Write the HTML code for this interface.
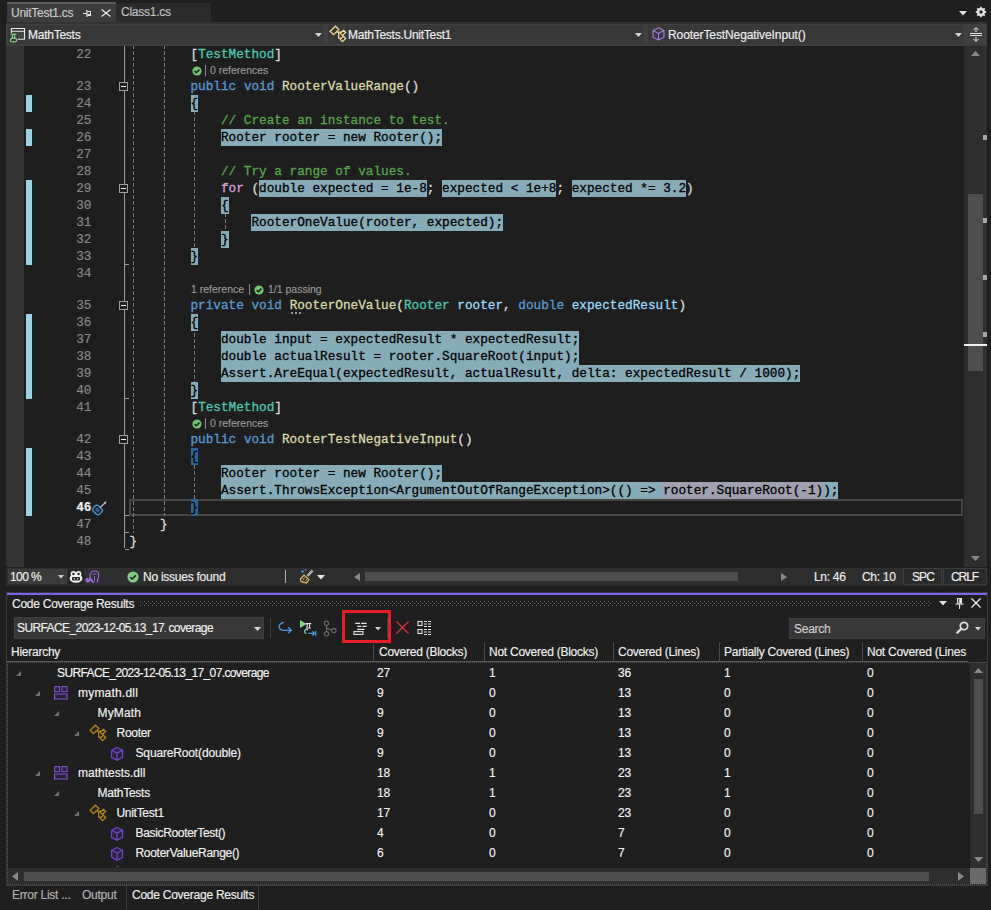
<!DOCTYPE html>
<html><head><meta charset="utf-8">
<style>
*{box-sizing:border-box}
html,body{margin:0;padding:0}
body{width:991px;height:910px;overflow:hidden;background:#1f1f1f;position:relative;font-family:"Liberation Sans",sans-serif;font-size:12px;letter-spacing:-0.25px;color:#dcdcdc;-webkit-text-stroke:0.15px currentColor}
.abs{position:absolute}
svg.abs{overflow:visible}
.cl{position:absolute;left:129.5px;height:17px;line-height:17px;white-space:pre;font-family:"Liberation Mono",monospace;font-size:12.71px;color:#dcdcdc;-webkit-text-stroke:0.3px currentColor;letter-spacing:0}
.hl,.pt,.bm{display:inline-block;height:17px;vertical-align:top}
.hl{background:#86acba;color:#000}
.pt{background:#a0a0b0;color:#000}
.bm{background:#2b659e;color:#000}
.ln{position:absolute;left:40px;width:51.5px;text-align:right;height:17px;line-height:17px;font-family:"Liberation Mono",monospace;font-size:12.71px;color:#8a8a8a;letter-spacing:0}
.ln.cur{color:#f0f0f0;font-weight:bold}
.lens{position:absolute;height:15px;line-height:15px;font-size:10.5px;letter-spacing:0;color:#9a9a9a;white-space:pre}
.sep{display:inline-block;width:1px;height:11px;background:#8a8a8a;vertical-align:middle;margin-right:4px;position:relative;top:-1px}
.covbar{position:absolute;left:26px;width:6px;background:#9cd2e4}
.dash{width:1px;background:linear-gradient(to bottom,#7a7a7a 0,#7a7a7a 4px,transparent 4px,transparent 6px);background-size:1px 6px}
.dots{background-image:radial-gradient(#4a4a4a 0.7px,transparent 0.8px);background-size:4px 3px}
</style></head><body>
<!-- tab bar -->
<div class="abs" style="left:7px;top:2px;width:109px;height:20px;background:#3d3d3d;border-top:2px solid #5a5a5a"></div>
<div class="abs" style="left:11px;top:4px;height:18px;line-height:18px;color:#cccccc">UnitTest1.cs</div>
<div class="abs" style="left:116px;top:3px;width:95px;height:19px;background:#2b2b2b"></div>
<div class="abs" style="left:121px;top:3px;height:19px;line-height:19px;color:#c4c4c4">Class1.cs</div>
<!-- nav bar -->
<div class="abs" style="left:6px;top:22px;width:981px;height:24px;background:#3f3f3f;border-top:2px solid #333"></div>
<div class="abs" style="left:8px;top:25px;width:315px;height:19px;background:#383838"></div>
<div class="abs" style="left:328px;top:25px;width:315px;height:19px;background:#383838"></div>
<div class="abs" style="left:648px;top:25px;width:315px;height:19px;background:#383838"></div>
<div class="abs" style="left:28px;top:26px;height:19px;line-height:19px;color:#f0f0f0">MathTests</div>
<div class="abs" style="left:348px;top:26px;height:19px;line-height:19px;color:#f0f0f0">MathTests.UnitTest1</div>
<div class="abs" style="left:668px;top:26px;height:19px;line-height:19px;color:#f0f0f0;letter-spacing:-0.1px">RooterTestNegativeInput()</div>
<svg class="abs" style="left:83px;top:10px" width="9" height="7" viewBox="0 0 9 7"><g fill="#e8e8e8"><rect x="0" y="3" width="3.5" height="1"/><rect x="3.3" y="0" width="1.2" height="7"/><rect x="4.5" y="1" width="3.5" height="1"/><rect x="7" y="1" width="1" height="5"/><rect x="4.5" y="4" width="3.5" height="2"/></g></svg>
<svg class="abs" style="left:101px;top:9px" width="10" height="8" viewBox="0 0 10 8"><path d="M0.6 0.4 L9.4 7.6 M9.4 0.4 L0.6 7.6" stroke="#e8e8e8" stroke-width="1.3"/></svg>
<svg class="abs" style="left:959.0px;top:11.25px" width="8" height="4.5" viewBox="0 0 8 4.5"><path d="M0 0 L8 0 L4.0 4.5 Z" fill="#e0e0e0"/></svg>
<svg class="abs" style="left:975px;top:6px" width="12" height="12" viewBox="0 0 12 12"><g fill="#e6e6e6"><circle cx="6" cy="6" r="3.9"/><rect x="5.1" y="0.8" width="1.8" height="10.4"/><rect x="0.8" y="5.1" width="10.4" height="1.8"/><rect x="5.1" y="0.8" width="1.8" height="10.4" transform="rotate(45 6 6)"/><rect x="5.1" y="0.8" width="1.8" height="10.4" transform="rotate(-45 6 6)"/></g><circle cx="6" cy="6" r="1.7" fill="#1f1f1f"/></svg>
<svg class="abs" style="left:9px;top:27px" width="17" height="16" viewBox="0 0 17 16"><rect x="8.5" y="4.5" width="7" height="7.5" fill="#454545"/><path d="M2.4 6 V1.5 H15.5 V12.3 H8.8 M2.4 4.3 H15.5" stroke="#e8e8e8" stroke-width="1.1" fill="none"/><rect x="1.6" y="6.6" width="5.8" height="1.2" fill="#86dc8a"/><rect x="2.8" y="7.5" width="1.1" height="3.6" fill="#86dc8a"/><rect x="5.1" y="7.5" width="1.1" height="3.6" fill="#86dc8a"/><path d="M1.4 13.8 Q1.2 11.6 3 11.1 H6.1 Q7.9 11.6 7.7 13.8 Q7.4 14.9 4.55 14.9 Q1.7 14.9 1.4 13.8 Z" stroke="#86dc8a" stroke-width="1.2" fill="none"/></svg>
<svg class="abs" style="left:314.5px;top:33.0px" width="7" height="4" viewBox="0 0 7 4"><path d="M0 0 L7 0 L3.5 4 Z" fill="#d8d8d8"/></svg>
<svg class="abs" style="left:326px;top:24px" width="21" height="20" viewBox="0 0 21 20"><g fill="none" stroke="#f5dc96" stroke-width="1.25" stroke-linejoin="miter"><path d="M9.4 2.2 L12.8 5.6 L7.5 10.7 L4.1 7.3 Z" fill="#3a352a"/><path d="M17.4 6.3 L19.7 8.5 L16.5 11.4 L14.3 9.2 Z" fill="#3a352a"/><path d="M17.4 12.1 L19.7 14.5 L16.5 17.7 L14.3 15.3 Z" fill="#3a352a"/><path d="M10.3 8 H15 M12.7 8 V14 H14.8"/></g></svg>
<svg class="abs" style="left:634.5px;top:33.0px" width="7" height="4" viewBox="0 0 7 4"><path d="M0 0 L7 0 L3.5 4 Z" fill="#d8d8d8"/></svg>
<svg class="abs" style="left:652px;top:27px" width="13" height="14" viewBox="0 0 13 14"><path d="M6.5 0.8 L12 3.6 V10.2 L6.5 13 L1 10.2 V3.6 Z M1 3.6 L6.5 6.4 L12 3.6 M6.5 6.4 V13" stroke="#a77fd6" stroke-width="1.1" fill="#3a3446"/></svg>
<svg class="abs" style="left:954.5px;top:33.0px" width="7" height="4" viewBox="0 0 7 4"><path d="M0 0 L7 0 L3.5 4 Z" fill="#d8d8d8"/></svg>
<svg class="abs" style="left:970px;top:27px" width="12" height="15" viewBox="0 0 12 15"><rect x="0" y="6" width="12" height="1" fill="#e6e6e6"/><rect x="0" y="8" width="12" height="1" fill="#e6e6e6"/><rect x="5.5" y="1" width="1" height="4" fill="#e6e6e6"/><rect x="5.5" y="10" width="1" height="4" fill="#e6e6e6"/><path d="M3.5 3 L6 0.5 L8.5 3 M3.5 12 L6 14.5 L8.5 12" stroke="#e6e6e6" stroke-width="1" fill="none"/></svg>
<!-- editor -->
<div class="abs" style="left:6px;top:46px;width:18px;height:521px;background:#333"></div>
<div class="abs" style="left:24px;top:46px;width:940px;height:521px;background:#1e1e1e"></div>
<div class="abs" style="left:964px;top:46px;width:23px;height:521px;background:#2e2e2e"></div>
<svg class="abs" style="left:971px;top:51px" width="9" height="5" viewBox="0 0 9 5"><path d="M0 5 L4.5 0 L9 5 Z" fill="#8a8a8a"/></svg>
<svg class="abs" style="left:971px;top:556px" width="9" height="5" viewBox="0 0 9 5"><path d="M0 0 L4.5 5 L9 0 Z" fill="#8a8a8a"/></svg>
<div class="abs" style="left:968px;top:194px;width:15px;height:177px;background:#4d4d4d"></div>
<div class="abs" style="left:983px;top:135px;width:4px;height:5px;background:#a8a8a8"></div>
<div class="abs" style="left:983px;top:218px;width:4px;height:5px;background:#a8a8a8"></div>
<div class="abs" style="left:983px;top:275px;width:4px;height:5px;background:#a8a8a8"></div>
<div class="abs" style="left:983px;top:332px;width:4px;height:5px;background:#a8a8a8"></div>
<div class="abs" style="left:964px;top:344px;width:23px;height:2px;background:#f0f0f0"></div>
<div class="abs" style="left:129px;top:499px;width:834px;height:17px;border:2px solid #464646"></div>
<div class="abs" style="left:124px;top:46px;width:1px;height:502px;background:#9a9a9a"></div>
<svg class="abs" style="left:119px;top:82px" width="9" height="9" viewBox="0 0 9 9"><rect x="0.5" y="0.5" width="8" height="8" fill="#1e1e1e" stroke="#a0a0a0"/><rect x="2" y="4" width="5" height="1" fill="#f0f0f0"/></svg>
<svg class="abs" style="left:119px;top:184px" width="9" height="9" viewBox="0 0 9 9"><rect x="0.5" y="0.5" width="8" height="8" fill="#1e1e1e" stroke="#a0a0a0"/><rect x="2" y="4" width="5" height="1" fill="#f0f0f0"/></svg>
<svg class="abs" style="left:119px;top:301px" width="9" height="9" viewBox="0 0 9 9"><rect x="0.5" y="0.5" width="8" height="8" fill="#1e1e1e" stroke="#a0a0a0"/><rect x="2" y="4" width="5" height="1" fill="#f0f0f0"/></svg>
<svg class="abs" style="left:119px;top:435px" width="9" height="9" viewBox="0 0 9 9"><rect x="0.5" y="0.5" width="8" height="8" fill="#1e1e1e" stroke="#a0a0a0"/><rect x="2" y="4" width="5" height="1" fill="#f0f0f0"/></svg>
<div class="abs" style="left:125px;top:264px;width:4px;height:1px;background:#9a9a9a"></div>
<div class="abs" style="left:125px;top:398px;width:4px;height:1px;background:#9a9a9a"></div>
<div class="abs" style="left:125px;top:515px;width:4px;height:1px;background:#9a9a9a"></div>
<div class="abs" style="left:125px;top:532px;width:4px;height:1px;background:#9a9a9a"></div>
<div class="abs" style="left:125px;top:549px;width:4px;height:1px;background:#9a9a9a"></div>
<div class="abs dash" style="left:133px;top:46px;height:487px;background-position:0 5px"></div>
<div class="abs dash" style="left:164px;top:46px;height:470px;background-position:0 5px"></div>
<div class="abs dash" style="left:194px;top:112px;height:136px;background-position:0 5px"></div>
<div class="abs dash" style="left:225px;top:214px;height:17px;background-position:0 5px"></div>
<div class="abs dash" style="left:194px;top:331px;height:51px;background-position:0 2px"></div>
<div class="abs dash" style="left:194px;top:465px;height:34px;background-position:0 0px"></div>
<svg class="abs" style="left:91px;top:498px" width="19" height="18" viewBox="0 0 19 18"><g transform="rotate(45 9.5 9)"><rect x="5" y="9.5" width="9" height="7.5" rx="2.6" fill="none" stroke="#4a9de0" stroke-width="1.3"/><rect x="7.2" y="11.6" width="4.6" height="3.3" fill="#2f5f8f"/><rect x="9" y="3" width="1.4" height="7" fill="#b8b8b8"/><path d="M8.3 3.5 L9.7 0.5 L11.1 3.5 Z" fill="#b8b8b8"/></g></svg>
<div class="abs" style="left:291px;top:312px;width:2px;height:2px;background:#9a9a9a"></div>
<div class="abs" style="left:295px;top:312px;width:2px;height:2px;background:#9a9a9a"></div>
<div class="abs" style="left:299px;top:312px;width:2px;height:2px;background:#9a9a9a"></div>
<div class="abs" style="left:375px;top:143px;width:2px;height:2px;background:#b0a4a8"></div>
<div class="abs" style="left:379px;top:143px;width:2px;height:2px;background:#b0a4a8"></div>
<div class="abs" style="left:383px;top:143px;width:2px;height:2px;background:#b0a4a8"></div>
<div class="cl" style="top:46px">        <span style="color:#dcdcdc">[</span><span style="color:#4ec9b0">TestMethod</span><span style="color:#dcdcdc">]</span></div>
<div class="ln" style="top:46px">22</div>
<div class="cl" style="top:78px">        <span style="color:#569cd6">public</span> <span style="color:#569cd6">void</span> <span style="color:#dcdcaa">RooterValueRange</span><span style="color:#dcdcdc">()</span></div>
<div class="ln" style="top:78px">23</div>
<div class="cl" style="top:95px">        <span class="hl">{</span></div>
<div class="ln" style="top:95px">24</div>
<div class="cl" style="top:112px">            <span style="color:#57a64a">// Create an instance to test.</span></div>
<div class="ln" style="top:112px">25</div>
<div class="cl" style="top:129px">            <span class="hl">Rooter rooter = new Rooter();</span></div>
<div class="ln" style="top:129px">26</div>
<div class="cl" style="top:146px"></div>
<div class="ln" style="top:146px">27</div>
<div class="cl" style="top:163px">            <span style="color:#57a64a">// Try a range of values.</span></div>
<div class="ln" style="top:163px">28</div>
<div class="cl" style="top:180px">            <span style="color:#d8a0df">for</span><span style="color:#dcdcdc"> (</span><span class="hl">double expected = 1e-8</span><span style="color:#dcdcdc">; </span><span class="hl">expected &lt; 1e+8</span><span style="color:#dcdcdc">; </span><span class="hl">expected *= 3.2</span><span style="color:#dcdcdc">)</span></div>
<div class="ln" style="top:180px">29</div>
<div class="cl" style="top:197px">            <span class="hl">{</span></div>
<div class="ln" style="top:197px">30</div>
<div class="cl" style="top:214px">                <span class="hl">RooterOneValue(rooter, expected);</span></div>
<div class="ln" style="top:214px">31</div>
<div class="cl" style="top:231px">            <span class="hl">}</span></div>
<div class="ln" style="top:231px">32</div>
<div class="cl" style="top:248px">        <span class="hl">}</span></div>
<div class="ln" style="top:248px">33</div>
<div class="cl" style="top:265px"></div>
<div class="ln" style="top:265px">34</div>
<div class="cl" style="top:297px">        <span style="color:#569cd6">private</span> <span style="color:#569cd6">void</span> <span style="color:#dcdcaa">RooterOneValue</span><span style="color:#dcdcdc">(</span><span style="color:#4ec9b0">Rooter</span> <span style="color:#9cdcfe">rooter</span><span style="color:#dcdcdc">, </span><span style="color:#569cd6">double</span> <span style="color:#9cdcfe">expectedResult</span><span style="color:#dcdcdc">)</span></div>
<div class="ln" style="top:297px">35</div>
<div class="cl" style="top:314px">        <span class="hl">{</span></div>
<div class="ln" style="top:314px">36</div>
<div class="cl" style="top:331px">            <span class="hl">double input = expectedResult * expectedResult;</span></div>
<div class="ln" style="top:331px">37</div>
<div class="cl" style="top:348px">            <span class="hl">double actualResult = rooter.SquareRoot(input);</span></div>
<div class="ln" style="top:348px">38</div>
<div class="cl" style="top:365px">            <span class="hl">Assert.AreEqual(expectedResult, actualResult, delta: expectedResult / 1000);</span></div>
<div class="ln" style="top:365px">39</div>
<div class="cl" style="top:382px">        <span class="hl">}</span></div>
<div class="ln" style="top:382px">40</div>
<div class="cl" style="top:399px">        <span style="color:#dcdcdc">[</span><span style="color:#4ec9b0">TestMethod</span><span style="color:#dcdcdc">]</span></div>
<div class="ln" style="top:399px">41</div>
<div class="cl" style="top:431px">        <span style="color:#569cd6">public</span> <span style="color:#569cd6">void</span> <span style="color:#dcdcaa">RooterTestNegativeInput</span><span style="color:#dcdcdc">()</span></div>
<div class="ln" style="top:431px">42</div>
<div class="cl" style="top:448px">        <span class="bm">{</span></div>
<div class="ln" style="top:448px">43</div>
<div class="cl" style="top:465px">            <span class="hl">Rooter rooter = new Rooter();</span></div>
<div class="ln" style="top:465px">44</div>
<div class="cl" style="top:482px">            <span class="hl">Assert.ThrowsException&lt;ArgumentOutOfRangeException&gt;(() =&gt; </span><span class="pt">rooter.SquareRoot(-1)</span><span class="hl">);</span></div>
<div class="ln" style="top:482px">45</div>
<div class="cl" style="top:499px">        <span class="bm">}</span></div>
<div class="ln cur" style="top:499px">46</div>
<div class="cl" style="top:516px">    <span style="color:#dcdcdc">}</span></div>
<div class="ln" style="top:516px">47</div>
<div class="cl" style="top:533px"><span style="color:#dcdcdc">}</span></div>
<div class="ln" style="top:533px">48</div>
<svg style="position:absolute;left:192px;top:65.5px" width="10" height="10" viewBox="0 0 10 10"><circle cx="5" cy="5" r="4.6" fill="#6cc66c"/><path d="M2.6 5.1 L4.3 6.7 L7.4 3.6" stroke="#1e1e1e" stroke-width="1.5" fill="none"/></svg>
<div class="lens" style="left:205px;top:63px"><span class="sep"></span>0 references</div>
<div class="lens" style="left:191px;top:282px">1 reference</div>
<div class="lens" style="left:249px;top:282px"><span class="sep"></span></div>
<svg style="position:absolute;left:254px;top:284.5px" width="10" height="10" viewBox="0 0 10 10"><circle cx="5" cy="5" r="4.6" fill="#6cc66c"/><path d="M2.6 5.1 L4.3 6.7 L7.4 3.6" stroke="#1e1e1e" stroke-width="1.5" fill="none"/></svg>
<div class="lens" style="left:268px;top:282px">1/1 passing</div>
<svg style="position:absolute;left:192px;top:418.5px" width="10" height="10" viewBox="0 0 10 10"><circle cx="5" cy="5" r="4.6" fill="#6cc66c"/><path d="M2.6 5.1 L4.3 6.7 L7.4 3.6" stroke="#1e1e1e" stroke-width="1.5" fill="none"/></svg>
<div class="lens" style="left:205px;top:416px"><span class="sep"></span>0 references</div>
<div class="covbar" style="top:95px;height:17px"></div>
<div class="covbar" style="top:129px;height:17px"></div>
<div class="covbar" style="top:180px;height:85px"></div>
<div class="covbar" style="top:314px;height:85px"></div>
<div class="covbar" style="top:448px;height:68px"></div>
<div class="abs" style="left:6px;top:568px;width:981px;height:18px;background:#2e2e2e"></div>
<div class="abs" style="left:8px;top:569px;width:59px;height:15px;background:#3b3b3b"></div>
<div class="abs" style="left:10px;top:570px;height:15px;line-height:15px;color:#f0f0f0;letter-spacing:-0.6px">100 %</div>
<svg class="abs" style="left:58.0px;top:575.25px" width="6" height="3.5" viewBox="0 0 6 3.5"><path d="M0 0 L6 0 L3.0 3.5 Z" fill="#cfcfcf"/></svg>
<div class="abs" style="left:68px;top:569px;width:16px;height:15px;background:#262626"></div>
<svg class="abs" style="left:69px;top:570px" width="14" height="13" viewBox="0 0 14 13"><ellipse cx="7" cy="8.4" rx="6.4" ry="4.3" fill="#f0f0f0"/><circle cx="4.4" cy="3.9" r="2.8" fill="#f0f0f0"/><circle cx="9.6" cy="3.9" r="2.8" fill="#f0f0f0"/><circle cx="4.4" cy="3.9" r="1.2" fill="#262626"/><circle cx="9.6" cy="3.9" r="1.2" fill="#262626"/><rect x="3" y="6.9" width="8" height="3.7" rx="1" fill="#262626"/><rect x="4.7" y="8" width="1.2" height="1.6" fill="#d0d0d0"/><rect x="8.1" y="8" width="1.2" height="1.6" fill="#d0d0d0"/></svg>
<svg class="abs" style="left:86px;top:570px" width="14" height="14" viewBox="0 0 14 14"><path d="M6.5 12.5 V10.5 Q3.8 9 4 5.5 Q4.5 1 8.5 1 Q12.8 1 12.8 5.5 Q12.8 8 11.5 9.5 V12.5" stroke="#9a68dc" stroke-width="1.2" fill="none"/><path d="M6.5 4.5 Q8.5 3 10.5 4.5 M8.5 6 V11.5" stroke="#9a68dc" stroke-width="1" fill="none"/><path d="M1.8 7.8 A2.4 2.4 0 1 0 4.2 10.6 L7 13.5 L8.2 12.3 L5.4 9.4 A2.4 2.4 0 0 0 2.6 7 L3.6 8.6 L2.6 9.6 Z" fill="#9a68dc"/></svg>
<svg class="abs" style="left:127px;top:571px" width="12" height="12" viewBox="0 0 12 12"><circle cx="6" cy="6" r="5.6" fill="#7ccc7c"/><path d="M3.2 6.2 L5.2 8 L8.8 4.4" stroke="#1e1e1e" stroke-width="1.5" fill="none"/></svg>
<div class="abs" style="left:143px;top:570px;height:15px;line-height:15px;color:#f0f0f0">No issues found</div>
<div class="abs" style="left:285px;top:570px;width:1px;height:13px;background:#b0b0b8"></div>
<svg class="abs" style="left:299px;top:569px" width="15" height="15" viewBox="0 0 15 15"><path d="M8.5 7 L13.5 1.5" stroke="#cfcfcf" stroke-width="2.2"/><path d="M8.5 7 L13.5 1.5" stroke="#555" stroke-width="0.8" stroke-dasharray="1 1"/><path d="M5 6 L10 10.5 L7.5 14 L2 12.5 L1.5 10 Z" fill="none" stroke="#d8b46a" stroke-width="1.3"/><path d="M4 11 L5.5 8.5 M6.5 12 L8 9.5" stroke="#d8b46a" stroke-width="0.9"/><path d="M2 2.5 L3.5 1 L5 2.5 L3.5 4 Z" fill="#4aa0e8"/><path d="M5.5 0.8 L6.5 0 L7.5 0.8 L6.5 1.8 Z" fill="#9a7ad8"/></svg>
<svg class="abs" style="left:316.5px;top:574.75px" width="8" height="4.5" viewBox="0 0 8 4.5"><path d="M0 0 L8 0 L4.0 4.5 Z" fill="#e8e8e8"/></svg>
<svg class="abs" style="left:354px;top:573px" width="6" height="8" viewBox="0 0 6 8"><path d="M6 0 L0 4 L6 8 Z" fill="#8a8a8a"/></svg>
<div class="abs" style="left:365px;top:572px;width:373px;height:9px;background:#4d4d4d"></div>
<svg class="abs" style="left:781px;top:573px" width="6" height="8" viewBox="0 0 6 8"><path d="M0 0 L6 4 L0 8 Z" fill="#8a8a8a"/></svg>
<div class="abs" style="left:814px;top:570px;height:15px;line-height:15px;color:#f0f0f0;letter-spacing:-0.3px">Ln: 46</div>
<div class="abs" style="left:862px;top:570px;height:15px;line-height:15px;color:#f0f0f0;letter-spacing:-0.3px">Ch: 10</div>
<div class="abs" style="left:903px;top:568px;width:39px;height:17px;border:1px solid #3c3c3c;background:#2a2a2a"></div>
<div class="abs" style="left:943px;top:568px;width:44px;height:17px;border:1px solid #3c3c3c;background:#2a2a2a"></div>
<div class="abs" style="left:912px;top:570px;height:15px;line-height:15px;color:#f0f0f0;letter-spacing:-0.9px">SPC</div>
<div class="abs" style="left:951px;top:570px;height:15px;line-height:15px;color:#f0f0f0;letter-spacing:-1.1px">CRLF</div>
<div class="abs" style="left:6px;top:592px;width:982px;height:294px;border:1px solid #3a3a3a"></div>
<div class="abs" style="left:7px;top:593px;width:980px;height:2px;background:#7a66ee"></div>
<div class="abs" style="left:12px;top:596px;height:16px;line-height:16px;color:#f0f0f0">Code Coverage Results</div>
<svg class="abs" style="left:140px;top:601px" width="792" height="5"><defs><pattern id="dp" width="4" height="4" patternUnits="userSpaceOnUse"><rect x="0" y="0" width="1" height="1" fill="#6a6a6a"/><rect x="2" y="2" width="1" height="1" fill="#6a6a6a"/></pattern></defs><rect width="792" height="5" fill="url(#dp)"/></svg>
<svg class="abs" style="left:939.0px;top:601.25px" width="8" height="4.5" viewBox="0 0 8 4.5"><path d="M0 0 L8 0 L4.0 4.5 Z" fill="#e0e0e0"/></svg>
<svg class="abs" style="left:955px;top:597px" width="9" height="13" viewBox="0 0 9 13"><rect x="2" y="1" width="5" height="5.5" fill="#e6e6e6"/><rect x="3.2" y="1.8" width="1" height="4" fill="#1f1f1f"/><rect x="0.5" y="6.5" width="8" height="1.1" fill="#e6e6e6"/><rect x="4" y="7" width="1.1" height="5" fill="#e6e6e6"/></svg>
<svg class="abs" style="left:971px;top:598px" width="10" height="10" viewBox="0 0 10 10"><path d="M0.5 0.5 L9.5 9.5 M9.5 0.5 L0.5 9.5" stroke="#e6e6e6" stroke-width="1.4"/></svg>
<div class="abs" style="left:14px;top:617px;width:250px;height:22px;background:#383838;border:1px solid #3f3f3f"></div>
<div class="abs" style="left:17px;top:618px;height:20px;line-height:20px;color:#f0f0f0;letter-spacing:-0.6px">SURFACE_2023-12-05.13_17<span style="font-size:8px">.</span> coverage</div>
<svg class="abs" style="left:253.5px;top:626.5px" width="7" height="4" viewBox="0 0 7 4"><path d="M0 0 L7 0 L3.5 4 Z" fill="#d8d8d8"/></svg>
<div class="abs" style="left:270px;top:618px;width:1px;height:20px;background:#3f3f3f"></div>
<svg class="abs" style="left:278px;top:621px" width="15" height="15" viewBox="0 0 15 15"><path d="M5.8 1.3 Q1.2 2.6 1.2 5.6 Q1.2 9.3 5.5 9.3 H13.3 M10.2 6.2 L13.3 9.3 L10.2 12.4" stroke="#4a9de8" stroke-width="1.3" fill="none"/></svg>
<svg class="abs" style="left:298px;top:619px" width="19" height="17" viewBox="0 0 19 17"><path d="M2 1 L8.6 5 L2 9 Z" fill="#7fd77a"/><g fill="#e8e8e8"><rect x="7.6" y="4" width="5.6" height="1.1"/><rect x="8.6" y="5" width="1.1" height="4"/><rect x="11" y="5" width="1.1" height="4"/><rect x="7.8" y="8.6" width="5.2" height="0.9"/></g><path d="M10 10.6 H8.3 Q6.6 10.6 6.6 12.4 Q6.6 14.4 8.3 14.4" stroke="#80e0dc" stroke-width="1.1" fill="none"/><path d="M10.5 14.4 H16.6 M14.4 12.2 L16.6 14.4 L14.4 16.6 M17.8 11.8 V17" stroke="#4aa8e8" stroke-width="1.1" fill="none"/></svg>
<svg class="abs" style="left:323px;top:620px" width="14" height="17" viewBox="0 0 14 17"><g fill="none" stroke="#6a6a6a" stroke-width="1.1"><circle cx="3.5" cy="3.3" r="2.2"/><circle cx="3.5" cy="13.8" r="2.2"/><circle cx="10.8" cy="10.6" r="2.2"/><path d="M3.5 5.5 V11.6 M3.9 8.3 L8.7 9.9"/></g></svg>
<div class="abs" style="left:342px;top:610px;width:49px;height:33px;border:3px solid #ec1c24"></div>
<svg class="abs" style="left:353px;top:622px" width="15" height="13" viewBox="0 0 15 13"><path d="M2.2 1.4 H7 M8 1.4 H13.6 M4.2 4.4 H8.2 M9.4 4.4 H13.6 M4.2 7.4 H11.4" stroke="#e6e6e6" stroke-width="1.2"/><rect x="1" y="9.6" width="9" height="2.8" fill="none" stroke="#e6e6e6" stroke-width="1.1"/></svg>
<svg class="abs" style="left:375.0px;top:626.75px" width="6" height="3.5" viewBox="0 0 6 3.5"><path d="M0 0 L6 0 L3.0 3.5 Z" fill="#d0d0d0"/></svg>
<div class="abs" style="left:387px;top:618px;width:1px;height:20px;background:#3f3f3f"></div>
<svg class="abs" style="left:396px;top:621px" width="13" height="13" viewBox="0 0 13 13"><path d="M0.5 0.5 L12.5 12.5 M12.5 0.5 L0.5 12.5" stroke="#e0303a" stroke-width="1.3"/></svg>
<svg class="abs" style="left:417px;top:620px" width="16" height="16" viewBox="0 0 16 16"><g fill="none" stroke="#e6e6e6" stroke-width="1.1"><rect x="1" y="1.5" width="4" height="4"/><rect x="1" y="9.5" width="4" height="4"/></g><path d="M7 1.5 H14 M7 4 H14 M7 6.5 H14 M7 9.5 H14 M7 12 H14 M7 14.5 H14" stroke="#e6e6e6" stroke-width="1" stroke-dasharray="3 1"/></svg>
<div class="abs" style="left:789px;top:618px;width:196px;height:21px;background:#383838;border:1px solid #3f3f3f"></div>
<div class="abs" style="left:794px;top:619px;height:21px;line-height:21px;color:#d0d0d0">Search</div>
<svg class="abs" style="left:956px;top:621px" width="13" height="13" viewBox="0 0 13 13"><circle cx="8" cy="5" r="3.7" fill="none" stroke="#e0e0e0" stroke-width="1.7"/><path d="M5.3 7.7 L1.2 11.8" stroke="#e0e0e0" stroke-width="2.2" stroke-linecap="round"/></svg>
<svg class="abs" style="left:975.0px;top:626.75px" width="6" height="3.5" viewBox="0 0 6 3.5"><path d="M0 0 L6 0 L3.0 3.5 Z" fill="#d8d8d8"/></svg>
<div class="abs" style="left:11px;top:643px;height:18px;line-height:18px;color:#f0f0f0;white-space:nowrap">Hierarchy</div>
<div class="abs" style="left:379px;top:643px;height:18px;line-height:18px;color:#f0f0f0;white-space:nowrap">Covered (Blocks)</div>
<div class="abs" style="left:489px;top:643px;height:18px;line-height:18px;color:#f0f0f0;white-space:nowrap">Not Covered (Blocks)</div>
<div class="abs" style="left:618px;top:643px;height:18px;line-height:18px;color:#f0f0f0;white-space:nowrap">Covered (Lines)</div>
<div class="abs" style="left:724px;top:643px;height:18px;line-height:18px;color:#f0f0f0;white-space:nowrap">Partially Covered (Lines)</div>
<div class="abs" style="left:867px;top:643px;height:18px;line-height:18px;color:#f0f0f0;white-space:nowrap">Not Covered (Lines</div>
<div class="abs" style="left:373px;top:642px;width:1px;height:19px;background:#4a4a4a"></div>
<div class="abs" style="left:484px;top:642px;width:1px;height:19px;background:#4a4a4a"></div>
<div class="abs" style="left:613px;top:642px;width:1px;height:19px;background:#4a4a4a"></div>
<div class="abs" style="left:719px;top:642px;width:1px;height:19px;background:#4a4a4a"></div>
<div class="abs" style="left:862px;top:642px;width:1px;height:19px;background:#4a4a4a"></div>
<div class="abs" style="left:968px;top:643px;width:19px;height:19px;background:#1f1f1f"></div>
<svg class="abs" style="left:16px;top:671px" width="5" height="5" viewBox="0 0 5 5"><path d="M5 0 L5 5 L0 5 Z" fill="#707070"/></svg>
<div class="abs" style="left:57px;top:663px;height:20px;line-height:20px;color:#f4f4f4;white-space:nowrap;letter-spacing:-0.62px">SURFACE_2023-12-05.13_17_07.coverage</div>
<div class="abs" style="left:377px;top:663px;height:20px;line-height:20px;color:#f4f4f4">27</div>
<div class="abs" style="left:489px;top:663px;height:20px;line-height:20px;color:#f4f4f4">1</div>
<div class="abs" style="left:618px;top:663px;height:20px;line-height:20px;color:#f4f4f4">36</div>
<div class="abs" style="left:724px;top:663px;height:20px;line-height:20px;color:#f4f4f4">1</div>
<div class="abs" style="left:867px;top:663px;height:20px;line-height:20px;color:#f4f4f4">0</div>
<svg class="abs" style="left:35px;top:691px" width="5" height="5" viewBox="0 0 5 5"><path d="M5 0 L5 5 L0 5 Z" fill="#707070"/></svg>
<svg class="abs" style="left:54px;top:686px" width="14" height="14" viewBox="0 0 14 14"><g fill="#272233" stroke="#7a4fc6" stroke-width="1.2"><rect x="0.6" y="0.6" width="5" height="5"/><rect x="8" y="0.6" width="5" height="5"/><rect x="0.6" y="8" width="12.4" height="5"/></g></svg>
<div class="abs" style="left:78px;top:683px;height:20px;line-height:20px;color:#f4f4f4;white-space:nowrap;letter-spacing:0.2px">mymath.dll</div>
<div class="abs" style="left:377px;top:683px;height:20px;line-height:20px;color:#f4f4f4">9</div>
<div class="abs" style="left:489px;top:683px;height:20px;line-height:20px;color:#f4f4f4">0</div>
<div class="abs" style="left:618px;top:683px;height:20px;line-height:20px;color:#f4f4f4">13</div>
<div class="abs" style="left:724px;top:683px;height:20px;line-height:20px;color:#f4f4f4">0</div>
<div class="abs" style="left:867px;top:683px;height:20px;line-height:20px;color:#f4f4f4">0</div>
<svg class="abs" style="left:54px;top:711px" width="5" height="5" viewBox="0 0 5 5"><path d="M5 0 L5 5 L0 5 Z" fill="#707070"/></svg>
<div class="abs" style="left:97.5px;top:703px;height:20px;line-height:20px;color:#f4f4f4;white-space:nowrap;letter-spacing:0.15px">MyMath</div>
<div class="abs" style="left:377px;top:703px;height:20px;line-height:20px;color:#f4f4f4">9</div>
<div class="abs" style="left:489px;top:703px;height:20px;line-height:20px;color:#f4f4f4">0</div>
<div class="abs" style="left:618px;top:703px;height:20px;line-height:20px;color:#f4f4f4">13</div>
<div class="abs" style="left:724px;top:703px;height:20px;line-height:20px;color:#f4f4f4">0</div>
<div class="abs" style="left:867px;top:703px;height:20px;line-height:20px;color:#f4f4f4">0</div>
<svg class="abs" style="left:74px;top:731px" width="5" height="5" viewBox="0 0 5 5"><path d="M5 0 L5 5 L0 5 Z" fill="#707070"/></svg>
<svg class="abs" style="left:86.0px;top:723px" width="21" height="20" viewBox="0 0 21 20"><g fill="none" stroke="#b88812" stroke-width="1.25" stroke-linejoin="miter"><path d="M9.4 2.2 L12.8 5.6 L7.5 10.7 L4.1 7.3 Z" fill="#262218"/><path d="M17.4 6.3 L19.7 8.5 L16.5 11.4 L14.3 9.2 Z" fill="#262218"/><path d="M17.4 12.1 L19.7 14.5 L16.5 17.7 L14.3 15.3 Z" fill="#262218"/><path d="M10.3 8 H15 M12.7 8 V14 H14.8"/></g></svg>
<div class="abs" style="left:116.5px;top:723px;height:20px;line-height:20px;color:#f4f4f4;white-space:nowrap;letter-spacing:-0.28px">Rooter</div>
<div class="abs" style="left:377px;top:723px;height:20px;line-height:20px;color:#f4f4f4">9</div>
<div class="abs" style="left:489px;top:723px;height:20px;line-height:20px;color:#f4f4f4">0</div>
<div class="abs" style="left:618px;top:723px;height:20px;line-height:20px;color:#f4f4f4">13</div>
<div class="abs" style="left:724px;top:723px;height:20px;line-height:20px;color:#f4f4f4">0</div>
<div class="abs" style="left:867px;top:723px;height:20px;line-height:20px;color:#f4f4f4">0</div>
<svg class="abs" style="left:111.0px;top:746.5px" width="13" height="14" viewBox="0 0 13 14"><path d="M6 0.5 L11.6 3.4 V10.4 L6 13.2 L0.6 10.4 V3.4 Z" fill="#29223a" stroke="#7046c0" stroke-width="1.3"/><path d="M0.6 3.4 L6 6.1 L11.6 3.4 M6 6.1 V13.2" fill="none" stroke="#7046c0" stroke-width="1.3"/></svg>
<div class="abs" style="left:135.5px;top:743px;height:20px;line-height:20px;color:#f4f4f4;white-space:nowrap;letter-spacing:-0.15px">SquareRoot(double)</div>
<div class="abs" style="left:377px;top:743px;height:20px;line-height:20px;color:#f4f4f4">9</div>
<div class="abs" style="left:489px;top:743px;height:20px;line-height:20px;color:#f4f4f4">0</div>
<div class="abs" style="left:618px;top:743px;height:20px;line-height:20px;color:#f4f4f4">13</div>
<div class="abs" style="left:724px;top:743px;height:20px;line-height:20px;color:#f4f4f4">0</div>
<div class="abs" style="left:867px;top:743px;height:20px;line-height:20px;color:#f4f4f4">0</div>
<svg class="abs" style="left:35px;top:771px" width="5" height="5" viewBox="0 0 5 5"><path d="M5 0 L5 5 L0 5 Z" fill="#707070"/></svg>
<svg class="abs" style="left:54px;top:766px" width="14" height="14" viewBox="0 0 14 14"><g fill="#272233" stroke="#7a4fc6" stroke-width="1.2"><rect x="0.6" y="0.6" width="5" height="5"/><rect x="8" y="0.6" width="5" height="5"/><rect x="0.6" y="8" width="12.4" height="5"/></g></svg>
<div class="abs" style="left:78px;top:763px;height:20px;line-height:20px;color:#f4f4f4;white-space:nowrap;letter-spacing:0px">mathtests.dll</div>
<div class="abs" style="left:377px;top:763px;height:20px;line-height:20px;color:#f4f4f4">18</div>
<div class="abs" style="left:489px;top:763px;height:20px;line-height:20px;color:#f4f4f4">1</div>
<div class="abs" style="left:618px;top:763px;height:20px;line-height:20px;color:#f4f4f4">23</div>
<div class="abs" style="left:724px;top:763px;height:20px;line-height:20px;color:#f4f4f4">1</div>
<div class="abs" style="left:867px;top:763px;height:20px;line-height:20px;color:#f4f4f4">0</div>
<svg class="abs" style="left:54px;top:791px" width="5" height="5" viewBox="0 0 5 5"><path d="M5 0 L5 5 L0 5 Z" fill="#707070"/></svg>
<div class="abs" style="left:97.5px;top:783px;height:20px;line-height:20px;color:#f4f4f4;white-space:nowrap;letter-spacing:-0.25px">MathTests</div>
<div class="abs" style="left:377px;top:783px;height:20px;line-height:20px;color:#f4f4f4">18</div>
<div class="abs" style="left:489px;top:783px;height:20px;line-height:20px;color:#f4f4f4">1</div>
<div class="abs" style="left:618px;top:783px;height:20px;line-height:20px;color:#f4f4f4">23</div>
<div class="abs" style="left:724px;top:783px;height:20px;line-height:20px;color:#f4f4f4">1</div>
<div class="abs" style="left:867px;top:783px;height:20px;line-height:20px;color:#f4f4f4">0</div>
<svg class="abs" style="left:74px;top:811px" width="5" height="5" viewBox="0 0 5 5"><path d="M5 0 L5 5 L0 5 Z" fill="#707070"/></svg>
<svg class="abs" style="left:86.0px;top:803px" width="21" height="20" viewBox="0 0 21 20"><g fill="none" stroke="#b88812" stroke-width="1.25" stroke-linejoin="miter"><path d="M9.4 2.2 L12.8 5.6 L7.5 10.7 L4.1 7.3 Z" fill="#262218"/><path d="M17.4 6.3 L19.7 8.5 L16.5 11.4 L14.3 9.2 Z" fill="#262218"/><path d="M17.4 12.1 L19.7 14.5 L16.5 17.7 L14.3 15.3 Z" fill="#262218"/><path d="M10.3 8 H15 M12.7 8 V14 H14.8"/></g></svg>
<div class="abs" style="left:116.5px;top:803px;height:20px;line-height:20px;color:#f4f4f4;white-space:nowrap;letter-spacing:-0.3px">UnitTest1</div>
<div class="abs" style="left:377px;top:803px;height:20px;line-height:20px;color:#f4f4f4">17</div>
<div class="abs" style="left:489px;top:803px;height:20px;line-height:20px;color:#f4f4f4">0</div>
<div class="abs" style="left:618px;top:803px;height:20px;line-height:20px;color:#f4f4f4">23</div>
<div class="abs" style="left:724px;top:803px;height:20px;line-height:20px;color:#f4f4f4">0</div>
<div class="abs" style="left:867px;top:803px;height:20px;line-height:20px;color:#f4f4f4">0</div>
<svg class="abs" style="left:111.0px;top:826.5px" width="13" height="14" viewBox="0 0 13 14"><path d="M6 0.5 L11.6 3.4 V10.4 L6 13.2 L0.6 10.4 V3.4 Z" fill="#29223a" stroke="#7046c0" stroke-width="1.3"/><path d="M0.6 3.4 L6 6.1 L11.6 3.4 M6 6.1 V13.2" fill="none" stroke="#7046c0" stroke-width="1.3"/></svg>
<div class="abs" style="left:135.5px;top:823px;height:20px;line-height:20px;color:#f4f4f4;white-space:nowrap;letter-spacing:-0.33px">BasicRooterTest()</div>
<div class="abs" style="left:377px;top:823px;height:20px;line-height:20px;color:#f4f4f4">4</div>
<div class="abs" style="left:489px;top:823px;height:20px;line-height:20px;color:#f4f4f4">0</div>
<div class="abs" style="left:618px;top:823px;height:20px;line-height:20px;color:#f4f4f4">7</div>
<div class="abs" style="left:724px;top:823px;height:20px;line-height:20px;color:#f4f4f4">0</div>
<div class="abs" style="left:867px;top:823px;height:20px;line-height:20px;color:#f4f4f4">0</div>
<svg class="abs" style="left:111.0px;top:846.5px" width="13" height="14" viewBox="0 0 13 14"><path d="M6 0.5 L11.6 3.4 V10.4 L6 13.2 L0.6 10.4 V3.4 Z" fill="#29223a" stroke="#7046c0" stroke-width="1.3"/><path d="M0.6 3.4 L6 6.1 L11.6 3.4 M6 6.1 V13.2" fill="none" stroke="#7046c0" stroke-width="1.3"/></svg>
<div class="abs" style="left:135.5px;top:843px;height:20px;line-height:20px;color:#f4f4f4;white-space:nowrap;letter-spacing:-0.3px">RooterValueRange()</div>
<div class="abs" style="left:377px;top:843px;height:20px;line-height:20px;color:#f4f4f4">6</div>
<div class="abs" style="left:489px;top:843px;height:20px;line-height:20px;color:#f4f4f4">0</div>
<div class="abs" style="left:618px;top:843px;height:20px;line-height:20px;color:#f4f4f4">7</div>
<div class="abs" style="left:724px;top:843px;height:20px;line-height:20px;color:#f4f4f4">0</div>
<div class="abs" style="left:867px;top:843px;height:20px;line-height:20px;color:#f4f4f4">0</div>
<div class="abs" style="left:116px;top:866px;width:3px;height:1px;background:#5a3a90"></div>
<div class="abs" style="left:970px;top:662px;width:16px;height:206px;background:#2e2e2e"></div>
<svg class="abs" style="left:974px;top:668px" width="9" height="5" viewBox="0 0 9 5"><path d="M0 5 L4.5 0 L9 5 Z" fill="#8a8a8a"/></svg>
<div class="abs" style="left:974px;top:679px;width:9px;height:135px;background:#4d4d4d"></div>
<svg class="abs" style="left:974px;top:857px" width="9" height="5" viewBox="0 0 9 5"><path d="M0 0 L4.5 5 L9 0 Z" fill="#8a8a8a"/></svg>
<div class="abs" style="left:8px;top:868px;width:962px;height:16px;background:#2e2e2e"></div>
<svg class="abs" style="left:12px;top:872px" width="6" height="9" viewBox="0 0 6 9"><path d="M6 0 L0 4.5 L6 9 Z" fill="#8a8a8a"/></svg>
<div class="abs" style="left:24px;top:872px;width:905px;height:9px;background:#4d4d4d"></div>
<svg class="abs" style="left:958px;top:872px" width="6" height="9" viewBox="0 0 6 9"><path d="M0 0 L6 4.5 L0 9 Z" fill="#8a8a8a"/></svg>
<div class="abs" style="left:970px;top:868px;width:16px;height:16px;background:#6a6a6a"></div>
<div class="abs" style="left:7px;top:662px;width:980px;height:223px;border:1px dotted #585858"></div>
<div class="abs" style="left:7px;top:661px;width:961px;height:1px;background:#555"></div>
<div class="abs" style="left:6px;top:885px;width:981px;height:1px;background:#3a3a3a"></div>
<div class="abs" style="left:126px;top:885px;width:133px;height:25px;border:1px solid #3f3f3f;border-bottom:none;background:#1f1f1f"></div>
<div class="abs" style="left:12px;top:886px;height:18px;line-height:18px;color:#b4b4b4">Error List ...</div>
<div class="abs" style="left:82px;top:886px;height:18px;line-height:18px;color:#b4b4b4">Output</div>
<div class="abs" style="left:132px;top:886px;height:18px;line-height:18px;color:#f0f0f0">Code Coverage Results</div>
</body></html>
